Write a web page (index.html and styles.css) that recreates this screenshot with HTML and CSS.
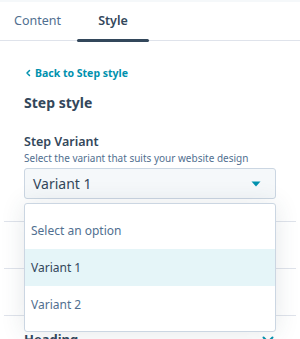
FILE: index.html
```html
<!DOCTYPE html>
<html lang="en">
<head>
    <meta charset="UTF-8">
    <meta name="viewport" content="width=device-width, initial-scale=1.0">
    <title>Step style</title>
    <link rel="stylesheet" href="styles.css">
</head>
<body>
    <div class="top-strip"></div>
    <nav class="tabs">
        <div class="tab">Content</div>
        <div class="tab active">Style</div>
    </nav>

    <div class="panel">
        <a class="back-link" href="#">
            <svg width="8" height="8" viewBox="0 0 8 8"><path d="M5.5 1.5 L3 4 L5.5 6.5" fill="none" stroke="#0091ae" stroke-width="1.5" stroke-linecap="round" stroke-linejoin="round"/></svg>
            Back to Step style
        </a>
        <h2 class="section-title">Step style</h2>

        <div class="field">
            <div class="field-label">Step Variant</div>
            <div class="field-help">Select the variant that suits your website design</div>
            <div class="select-wrap">
                <div class="select">
                    <span>Variant 1</span>
                    <svg width="10" height="6" viewBox="0 0 10 6"><path d="M0.5 0.5 H9.5 L5 5.5 Z" fill="#0091ae"/></svg>
                </div>
                <ul class="dropdown">
                    <li>Select an option</li>
                    <li class="selected">Variant 1</li>
                    <li>Variant 2</li>
                </ul>
            </div>
        </div>

        <div class="rows">
            <div class="row"></div>
            <div class="row"></div>
            <div class="row">
                <span>Heading</span>
                <svg width="12" height="8" viewBox="0 0 12 8"><path d="M1.5 1.5 L6 6 L10.5 1.5" fill="none" stroke="#0091ae" stroke-width="2" stroke-linecap="round" stroke-linejoin="round"/></svg>
            </div>
        </div>
    </div>
</body>
</html>
```

FILE: styles.css
```css
body {
    margin: 0;
    font-family: "Noto Sans", Arial, sans-serif;
    color: #33475b;
    background-color: #fff;
    overflow: hidden;
}

.top-strip {
    height: 2px;
    background-color: #f5f8fa;
}

.tabs {
    display: flex;
    height: 38px;
    border-bottom: 1px solid #dfe3eb;
}

.tab {
    position: relative;
    font-size: 12.5px;
    line-height: 38px;
    color: #516f90;
}

.tab:first-child {
    width: 63px;
    padding-left: 14px;
}

.tab.active {
    width: 72px;
    text-align: center;
    font-weight: 600;
    color: #33475b;
}

.tab.active::after {
    content: "";
    position: absolute;
    left: 0;
    right: 0;
    bottom: -2px;
    height: 3px;
    border-radius: 2px;
    background-color: #33475b;
}

.panel {
    padding: 0 24px;
}

.back-link {
    display: flex;
    align-items: center;
    gap: 3px;
    margin-top: 24px;
    font-size: 10.5px;
    line-height: 16px;
    font-weight: 700;
    color: #0091ae;
    text-decoration: none;
}

.section-title {
    margin: 12px 0 0;
    font-size: 14px;
    line-height: 20px;
    font-weight: 700;
}

.field {
    margin-top: 20px;
}

.field-label {
    font-size: 12.5px;
    line-height: 18px;
    font-weight: 600;
}

.field-help {
    font-size: 10px;
    line-height: 14px;
    color: #516f90;
}

.select-wrap {
    position: relative;
    margin-top: 3px;
}

.select {
    display: flex;
    align-items: center;
    justify-content: space-between;
    height: 29px;
    padding: 0 14px 0 8px;
    border: 1px solid #cbd6e2;
    border-radius: 3px;
    background-color: #f5f8fa;
    font-size: 14px;
}

.dropdown {
    position: absolute;
    top: 35px;
    left: 0;
    right: 0;
    z-index: 2;
    margin: 0;
    padding: 8px 0;
    list-style: none;
    background-color: #fff;
    border: 1px solid #cbd6e2;
    border-radius: 3px;
    box-shadow: 0 1px 24px rgba(45, 62, 80, 0.12);
}

.dropdown li {
    height: 37px;
    line-height: 37px;
    padding: 0 6px;
    font-size: 12px;
    color: #516f90;
}

.dropdown li.selected {
    background-color: #e5f5f8;
    color: #33475b;
}

.rows {
    margin: 22px -20px 0;
}

.row {
    display: flex;
    justify-content: space-between;
    align-items: flex-start;
    height: 46px;
    padding: 0 22px 0 20px;
    border-top: 1px solid #dfe3eb;
}

.row span {
    margin-top: 14px;
    font-size: 13px;
    font-weight: 700;
}

.row svg {
    margin-top: 20px;
}
```
